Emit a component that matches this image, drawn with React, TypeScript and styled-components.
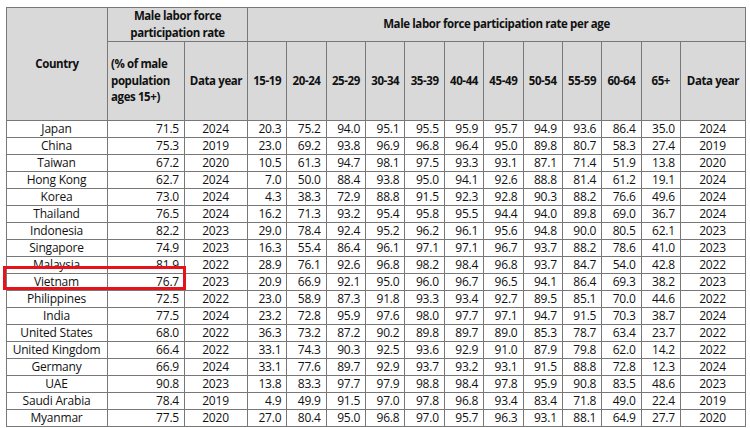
import styled, { createGlobalStyle } from 'styled-components';

const rows: [string, string, string, string[], string][] = [
  ['Japan', '71.5', '2024', ['20.3', '75.2', '94.0', '95.1', '95.5', '95.9', '95.7', '94.9', '93.6', '86.4', '35.0'], '2024'],
  ['China', '75.3', '2019', ['23.0', '69.2', '93.8', '96.9', '96.8', '96.4', '95.0', '89.8', '80.7', '58.3', '27.4'], '2019'],
  ['Taiwan', '67.2', '2020', ['10.5', '61.3', '94.7', '98.1', '97.5', '93.3', '93.1', '87.1', '71.4', '51.9', '13.8'], '2020'],
  ['Hong Kong', '62.7', '2024', ['7.0', '50.0', '88.4', '93.8', '95.0', '94.1', '92.6', '88.8', '81.4', '61.2', '19.1'], '2024'],
  ['Korea', '73.0', '2024', ['4.3', '38.3', '72.9', '88.8', '91.5', '92.3', '92.8', '90.3', '88.2', '76.6', '49.6'], '2024'],
  ['Thailand', '76.5', '2024', ['16.2', '71.3', '93.2', '95.4', '95.8', '95.5', '94.4', '94.0', '89.8', '69.0', '36.7'], '2024'],
  ['Indonesia', '82.2', '2023', ['29.0', '78.4', '92.4', '95.2', '96.2', '96.1', '95.6', '94.8', '90.0', '80.5', '62.1'], '2023'],
  ['Singapore', '74.9', '2023', ['16.3', '55.4', '86.4', '96.1', '97.1', '97.1', '96.7', '93.7', '88.2', '78.6', '41.0'], '2023'],
  ['Malaysia', '81.9', '2022', ['28.9', '76.1', '92.6', '96.8', '98.2', '98.4', '96.8', '93.7', '84.7', '54.0', '42.8'], '2022'],
  ['Vietnam', '76.7', '2023', ['20.9', '66.9', '92.1', '95.0', '96.0', '96.7', '96.5', '94.1', '86.4', '69.3', '38.2'], '2023'],
  ['Philippines', '72.5', '2022', ['23.0', '58.9', '87.3', '91.8', '93.3', '93.4', '92.7', '89.5', '85.1', '70.0', '44.6'], '2022'],
  ['India', '77.5', '2024', ['23.2', '72.8', '95.9', '97.6', '98.0', '97.7', '97.1', '94.7', '91.5', '70.3', '38.7'], '2024'],
  ['United States', '68.0', '2022', ['36.3', '73.2', '87.2', '90.2', '89.8', '89.7', '89.0', '85.3', '78.7', '63.4', '23.7'], '2022'],
  ['United Kingdom', '66.4', '2022', ['33.1', '74.3', '90.3', '92.5', '93.6', '92.9', '91.0', '87.9', '79.8', '62.0', '14.2'], '2022'],
  ['Germany', '66.9', '2024', ['33.1', '77.6', '89.7', '92.9', '93.7', '93.2', '93.1', '91.5', '88.8', '72.8', '12.3'], '2024'],
  ['UAE', '90.8', '2023', ['13.8', '83.3', '97.7', '97.9', '98.8', '98.4', '97.8', '95.9', '90.8', '83.5', '48.6'], '2023'],
  ['Saudi Arabia', '78.4', '2019', ['4.9', '49.9', '91.5', '97.0', '97.8', '96.8', '93.4', '83.4', '71.8', '49.0', '22.4'], '2019'],
  ['Myanmar', '77.5', '2020', ['27.0', '80.4', '95.0', '96.8', '97.0', '95.7', '96.3', '93.1', '88.1', '64.9', '27.7'], '2020'],
];

const ages = ['15-19', '20-24', '25-29', '30-34', '35-39', '40-44', '45-49', '50-54', '55-59', '60-64', '65+'];

const GlobalStyle = createGlobalStyle`
  body {
    margin: 0;
    background: #ffffff;
    font-family: "Open Sans", "Noto Sans", sans-serif;
    color: #111111;
  }
`;

const Page = styled.div`
  padding: 7px 0 0 6px;
`;

const Frame = styled.div`
  position: relative;
  width: 739px;
`;

const Table = styled.table`
  width: 739px;
  border-collapse: collapse;
  table-layout: fixed;
  font-size: 12px;
`;

const HeadCell = styled.th<{ $align?: string }>`
  background: #d9d9d9;
  border: 1px solid #787878;
  font-size: 11.5px;
  font-weight: 700;
  letter-spacing: -0.4px;
  line-height: 16.5px;
  padding: 0 3px;
  text-align: ${({ $align }) => $align || 'center'};
  vertical-align: middle;
`;

const Cell = styled.td<{ $align?: string }>`
  border: 1px solid #787878;
  height: 16px;
  line-height: 16px;
  padding: 0 5px 0 4px;
  letter-spacing: -0.2px;
  text-align: ${({ $align }) => $align || 'center'};
  white-space: nowrap;
`;

const TopRow = styled.tr`
  height: 31px;
`;

const LabelRow = styled.tr`
  height: 79px;
`;

const Highlight = styled.div`
  position: absolute;
  left: -3px;
  top: 259px;
  width: 183px;
  height: 24px;
  box-sizing: border-box;
  border: 3px solid #e5141b;
  pointer-events: none;
`;

export default function App() {
  return (
    <>
      <GlobalStyle />
      <Page>
        <Frame>
          <Table>
            <colgroup>
              <col style={{ width: 101 }} />
              <col style={{ width: 77 }} />
              <col style={{ width: 63 }} />
              {ages.map((a) => (
                <col key={a} style={{ width: 39.36 }} />
              ))}
              <col style={{ width: 65 }} />
            </colgroup>
            <thead>
              <TopRow>
                <HeadCell rowSpan={2}>Country</HeadCell>
                <HeadCell colSpan={2}>
                  Male labor force
                  <br />
                  participation rate
                </HeadCell>
                <HeadCell colSpan={12}>Male labor force participation rate per age</HeadCell>
              </TopRow>
              <LabelRow>
                <HeadCell $align="left">
                  (% of male
                  <br />
                  population
                  <br />
                  ages 15+)
                </HeadCell>
                <HeadCell>Data year</HeadCell>
                {ages.map((a) => (
                  <HeadCell key={a}>{a}</HeadCell>
                ))}
                <HeadCell>Data year</HeadCell>
              </LabelRow>
            </thead>
            <tbody>
              {rows.map(([country, rate, year, values, ageYear]) => (
                <tr key={country}>
                  <Cell>{country}</Cell>
                  <Cell $align="right">{rate}</Cell>
                  <Cell>{year}</Cell>
                  {values.map((v, i) => (
                    <Cell key={i} $align="right">
                      {v}
                    </Cell>
                  ))}
                  <Cell>{ageYear}</Cell>
                </tr>
              ))}
            </tbody>
          </Table>
          <Highlight />
        </Frame>
      </Page>
    </>
  );
}
